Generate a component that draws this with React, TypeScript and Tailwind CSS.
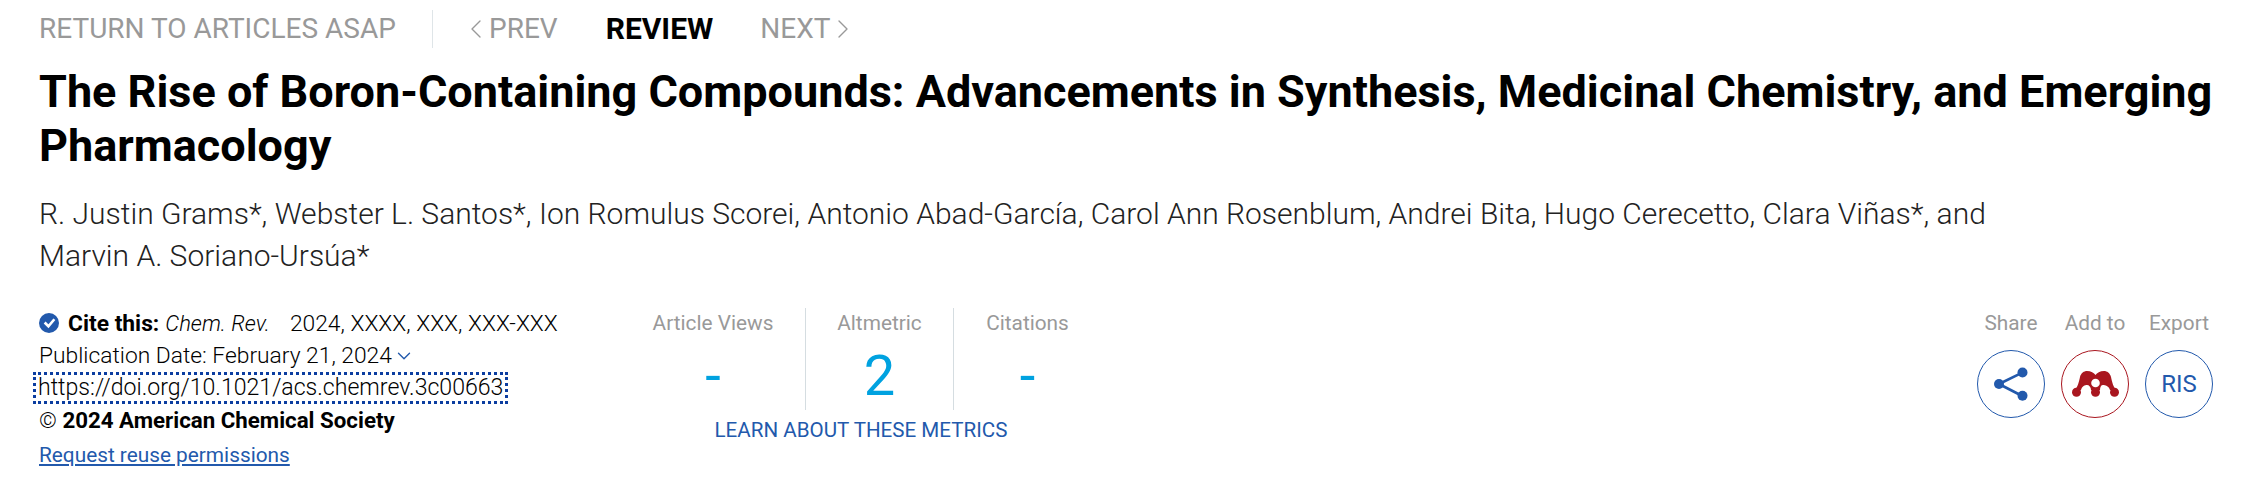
import { ChevronDown, ChevronLeft, ChevronRight } from 'lucide-react'

// ── small pieces ──────────────────────────────────────────────────────────────

function Metric({ label, value, width, border }: { label: string; value: string; width: string; border?: boolean }) {
  return (
    <div className={`flex h-[102px] flex-col items-center ${border ? 'border-l border-[#d5dde1]' : ''} ${width}`}>
      <div className="text-[20.8px] leading-[30px] text-[#999]">{label}</div>
      <div className="mt-[8px] text-[56px] leading-[60px] text-[#00a2e0]">{value}</div>
    </div>
  )
}

function ShareIcon() {
  return (
    <svg viewBox="0 0 34 34" className="h-[34px] w-[34px]" fill="#2259ac">
      <path d="M5 17 L28.3 5.7 M5 17 L28.3 29" stroke="#2259ac" strokeWidth="2.6" fill="none" />
      <circle cx="5" cy="17" r="5" />
      <circle cx="28.5" cy="5.5" r="5" />
      <circle cx="28.5" cy="28.8" r="5" />
    </svg>
  )
}

function MendeleyIcon() {
  return (
    <svg viewBox="0 0 47 26" className="h-[26px] w-[47px]" fill="#a9161f">
      <path d="M2 19 C6 17 7 10 8 6 C9 2 12 0 15 0 C19 0 22 2 23.5 4 C25 2 28 0 32 0 C35 0 38 2 39 6 C40 10 41 17 45 19 L38 19 C37 15 33 14 31 14 C29 14 28 16 28 19 L19 19 C19 16 17 14 15 14 C13 14 10 15 9 19 Z" />
      <circle cx="4.5" cy="21.3" r="4.5" />
      <circle cx="23.5" cy="21.3" r="4.5" />
      <circle cx="42.5" cy="21.3" r="4.5" />
      <circle cx="23.5" cy="12" r="4.3" fill="#fff" />
    </svg>
  )
}

// ── main page ─────────────────────────────────────────────────────────────────

export default function App() {
  return (
    <div className="h-[488px] w-[2251px] overflow-hidden bg-white pl-[39px] font-['Roboto',sans-serif] text-black">
      {/* article nav */}
      <div className="flex h-[44px] items-center pt-[13px] text-[28px] leading-[40px] text-[#999]">
        <span className="w-[394px] border-r border-[#dfe5e8] leading-[38px]">RETURN TO ARTICLES ASAP</span>
        <span className="ml-[27px] flex items-center"><ChevronLeft size={32} strokeWidth={1} className="-mr-[3px]" />PREV</span>
        <span className="ml-[48px] text-[30px] font-bold text-black">REVIEW</span>
        <span className="ml-[47px] flex items-center">NEXT<ChevronRight size={32} strokeWidth={1} className="-ml-[3px]" /></span>
      </div>

      {/* title */}
      <h1 className="mt-[21px] w-[2200px] text-[45px] leading-[54px] font-bold">
        The Rise of Boron-Containing Compounds: Advancements in Synthesis, Medicinal Chemistry, and Emerging Pharmacology
      </h1>

      {/* authors */}
      <div className="mt-[20px] w-[2100px] text-[30px] leading-[42px] font-light text-[#222]">
        R. Justin Grams*, Webster L. Santos*, Ion Romulus Scorei, Antonio Abad-García, Carol Ann Rosenblum, Andrei Bita, Hugo Cerecetto, Clara Viñas*, and
        <br />
        Marvin A. Soriano-Ursúa*
      </div>

      <div className="mt-[31px] flex items-start">
        {/* cite block */}
        <div className="w-[582px] text-[22.8px] leading-[32px]">
          <div className="flex items-center">
            <span className="mr-[9px] -mt-[3px] flex h-[20px] w-[20px] items-center justify-center rounded-full bg-[#2259ac]">
              <svg viewBox="0 0 12 12" className="h-[13px] w-[13px]" fill="none" stroke="#fff" strokeWidth="2.4"><path d="M1.5 6 L5 9.5 L10.5 3" /></svg>
            </span>
            <b className="mr-[6px]">Cite this:</b>
            <i className="mr-[20px] text-[22px] font-light">Chem. Rev.</i>
            <span className="font-light">2024, XXXX, XXX, XXX-XXX</span>
          </div>
          <div className="flex items-center font-light">
            Publication Date: February 21, 2024
            <ChevronDown size={22} strokeWidth={1.5} className="ml-[1px] text-[#2259ac]" />
          </div>
          <div className="-ml-[6px] w-fit px-[5px] text-[23.1px] font-light outline-dotted outline-[3px] -outline-offset-[3px] outline-[#0b3da0]">https://doi.org/10.1021/acs.chemrev.3c00663</div>
          <div className="text-[22.3px]"><span className="font-light">©</span> <b>2024 American Chemical Society</b></div>
          <div className="mt-[3px] text-[20.8px] text-[#2259ac] underline">Request reuse permissions</div>
        </div>

        {/* metrics */}
        <div className="w-[480px]">
          <div className="flex">
            <Metric label="Article Views" value="-" width="w-[184px]" />
            <Metric label="Altmetric" value="2" width="w-[148px]" border />
            <Metric label="Citations" value="-" width="w-[148px]" border />
          </div>
          <div className="mt-[6px] text-center text-[20.6px] leading-[28px] text-[#2259ac]">LEARN ABOUT THESE METRICS</div>
        </div>

        {/* share */}
        <div className="ml-[876px] flex gap-[16px] text-center">
          <div className="w-[68px]">
            <div className="text-[20.8px] leading-[30px] text-[#999]">Share</div>
            <div className="mt-[12px] flex h-[68px] w-[68px] items-center justify-center rounded-full border border-[#2259ac]"><ShareIcon /></div>
          </div>
          <div className="w-[68px]">
            <div className="text-[20.8px] leading-[30px] whitespace-nowrap text-[#999]">Add to</div>
            <div className="mt-[12px] flex h-[68px] w-[68px] items-center justify-center rounded-full border border-[#a9161f]"><MendeleyIcon /></div>
          </div>
          <div className="w-[68px]">
            <div className="text-[20.8px] leading-[30px] text-[#999]">Export</div>
            <div className="mt-[12px] flex h-[68px] w-[68px] items-center justify-center rounded-full border border-[#2259ac] text-[24px] text-[#2259ac]">RIS</div>
          </div>
        </div>
      </div>
    </div>
  )
}
